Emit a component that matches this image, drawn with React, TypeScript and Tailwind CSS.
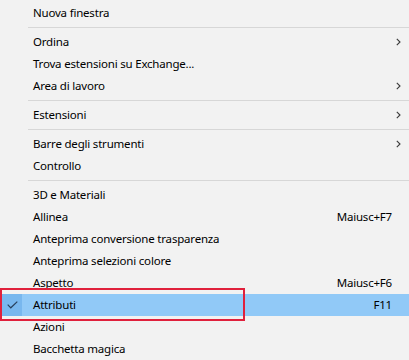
type Item =
  | { kind: "sep" }
  | { kind: "item"; label: string; shortcut?: string; submenu?: boolean; checked?: boolean };

const ITEMS: Item[] = [
  { kind: "item", label: "Nuova finestra" },
  { kind: "sep" },
  { kind: "item", label: "Ordina", submenu: true },
  { kind: "item", label: "Trova estensioni su Exchange..." },
  { kind: "item", label: "Area di lavoro", submenu: true },
  { kind: "sep" },
  { kind: "item", label: "Estensioni", submenu: true },
  { kind: "sep" },
  { kind: "item", label: "Barre degli strumenti", submenu: true },
  { kind: "item", label: "Controllo" },
  { kind: "sep" },
  { kind: "item", label: "3D e Materiali" },
  { kind: "item", label: "Allinea", shortcut: "Maiusc+F7" },
  { kind: "item", label: "Anteprima conversione trasparenza" },
  { kind: "item", label: "Anteprima selezioni colore" },
  { kind: "item", label: "Aspetto", shortcut: "Maiusc+F6" },
  { kind: "item", label: "Attributi", shortcut: "F11", checked: true },
  { kind: "item", label: "Azioni" },
  { kind: "item", label: "Bacchetta magica" },
];

function Chevron() {
  return (
    <svg width="5" height="8" viewBox="0 0 5 8" className="block">
      <path d="M0.8 0.8 L4 4 L0.8 7.2" fill="none" stroke="#3a3a3a" strokeWidth="1.1" />
    </svg>
  );
}

function Check() {
  return (
    <svg width="11" height="8" viewBox="0 0 11 8" className="block">
      <path d="M0.7 3.6 L3.8 6.8 L10.3 0.6" fill="none" stroke="#28405c" strokeWidth="1.2" />
    </svg>
  );
}

export default function App() {
  return (
    <div className="relative h-[360px] w-[409px] overflow-hidden bg-[#f2f2f2] pt-[2px] font-['Segoe_UI','Noto_Sans',sans-serif] text-[11.5px] tracking-[-0.2px] text-black">
      {ITEMS.map((item, index) =>
        item.kind === "sep" ? (
          <div key={index} className="flex h-[7px] items-center pl-[28px]">
            <div className="h-px w-full bg-[#d7d7d7]" />
          </div>
        ) : (
          <div
            key={index}
            className={
              item.checked
                ? "flex h-[22px] items-center bg-[#91c9f7]"
                : "flex h-[22px] items-center"
            }
          >
            <div
              className={
                item.checked
                  ? "flex h-full w-[22px] items-center justify-center bg-[#78b7ee] pl-[2px]"
                  : "h-full w-[22px]"
              }
            >
              {item.checked ? <Check /> : null}
            </div>
            <span className="ml-[11px] flex-1 whitespace-nowrap">{item.label}</span>
            {item.shortcut ? <span className="mr-[17px] whitespace-nowrap">{item.shortcut}</span> : null}
            {item.submenu ? (
              <div className="mr-[8px]">
                <Chevron />
              </div>
            ) : null}
          </div>
        )
      )}

      {/* annotation box around the checked row */}
      <div className="absolute left-0 top-[288px] h-[33px] w-[245px] border-2 border-[#e0203c]" />
    </div>
  );
}
